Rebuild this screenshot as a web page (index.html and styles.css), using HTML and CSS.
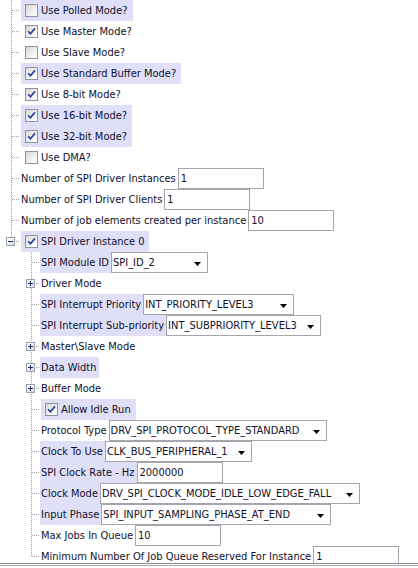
FILE: index.html
```html
<!DOCTYPE html>
<html lang="en">
<head>
<meta charset="utf-8">
<title>SPI Driver Configuration</title>
<link rel="stylesheet" href="styles.css">
</head>
<body>
<div class="tree">
  <div class="row"><span class="g tee"></span><span class="chk hl"><span class="cb"></span>Use Polled Mode?</span></div>
  <div class="row"><span class="g tee"></span><span class="chk"><span class="cb on"><svg viewBox="0 0 11 11" width="11" height="11"><path d="M2.2 5.2L4.4 7.8L9 2.4"/></svg></span>Use Master Mode?</span></div>
  <div class="row"><span class="g tee"></span><span class="chk"><span class="cb"></span>Use Slave Mode?</span></div>
  <div class="row"><span class="g tee"></span><span class="chk hl"><span class="cb on"><svg viewBox="0 0 11 11" width="11" height="11"><path d="M2.2 5.2L4.4 7.8L9 2.4"/></svg></span>Use Standard Buffer Mode?</span></div>
  <div class="row"><span class="g tee"></span><span class="chk"><span class="cb on"><svg viewBox="0 0 11 11" width="11" height="11"><path d="M2.2 5.2L4.4 7.8L9 2.4"/></svg></span>Use 8-bit Mode?</span></div>
  <div class="row"><span class="g tee"></span><span class="chk hl"><span class="cb on"><svg viewBox="0 0 11 11" width="11" height="11"><path d="M2.2 5.2L4.4 7.8L9 2.4"/></svg></span>Use 16-bit Mode?</span></div>
  <div class="row"><span class="g tee"></span><span class="chk hl"><span class="cb on"><svg viewBox="0 0 11 11" width="11" height="11"><path d="M2.2 5.2L4.4 7.8L9 2.4"/></svg></span>Use 32-bit Mode?</span></div>
  <div class="row"><span class="g tee"></span><span class="chk"><span class="cb"></span>Use DMA?</span></div>
  <div class="row"><span class="g tee"></span><span class="lbl">Number of SPI Driver Instances</span><span class="field">1</span></div>
  <div class="row"><span class="g tee"></span><span class="lbl">Number of SPI Driver Clients</span><span class="field">1</span></div>
  <div class="row"><span class="g tee"></span><span class="lbl">Number of job elements created per instance</span><span class="field">10</span></div>
  <div class="row"><span class="g elbow"><span class="exp"><svg viewBox="0 0 7 7" width="7" height="7"><path d="M1 3.5h5"/></svg></span></span><span class="chk hl"><span class="cb on"><svg viewBox="0 0 11 11" width="11" height="11"><path d="M2.2 5.2L4.4 7.8L9 2.4"/></svg></span>SPI Driver Instance 0</span></div>
  <div class="row"><span class="g"></span><span class="g tee"></span><span class="lbl hl">SPI Module ID</span><span class="combo w-module"><span>SPI_ID_2</span><svg viewBox="0 0 7 4" width="7" height="4"><path d="M0 0h7L3.5 4z"/></svg></span></div>
  <div class="row"><span class="g"></span><span class="g tee"><span class="exp"><svg viewBox="0 0 7 7" width="7" height="7"><path d="M1 3.5h5M3.5 1v5"/></svg></span></span><span class="lbl">Driver Mode</span></div>
  <div class="row"><span class="g"></span><span class="g tee"></span><span class="lbl hl">SPI Interrupt Priority</span><span class="combo w-prio"><span>INT_PRIORITY_LEVEL3</span><svg viewBox="0 0 7 4" width="7" height="4"><path d="M0 0h7L3.5 4z"/></svg></span></div>
  <div class="row"><span class="g"></span><span class="g tee"></span><span class="lbl hl">SPI Interrupt Sub-priority</span><span class="combo w-subprio"><span>INT_SUBPRIORITY_LEVEL3</span><svg viewBox="0 0 7 4" width="7" height="4"><path d="M0 0h7L3.5 4z"/></svg></span></div>
  <div class="row"><span class="g"></span><span class="g tee"><span class="exp"><svg viewBox="0 0 7 7" width="7" height="7"><path d="M1 3.5h5M3.5 1v5"/></svg></span></span><span class="lbl">Master\Slave Mode</span></div>
  <div class="row"><span class="g"></span><span class="g tee"><span class="exp"><svg viewBox="0 0 7 7" width="7" height="7"><path d="M1 3.5h5M3.5 1v5"/></svg></span></span><span class="lbl hl">Data Width</span></div>
  <div class="row"><span class="g"></span><span class="g tee"><span class="exp"><svg viewBox="0 0 7 7" width="7" height="7"><path d="M1 3.5h5M3.5 1v5"/></svg></span></span><span class="lbl">Buffer Mode</span></div>
  <div class="row"><span class="g"></span><span class="g tee"></span><span class="chk hl"><span class="cb on"><svg viewBox="0 0 11 11" width="11" height="11"><path d="M2.2 5.2L4.4 7.8L9 2.4"/></svg></span>Allow Idle Run</span></div>
  <div class="row"><span class="g"></span><span class="g tee"></span><span class="lbl">Protocol Type</span><span class="combo w-proto"><span>DRV_SPI_PROTOCOL_TYPE_STANDARD</span><svg viewBox="0 0 7 4" width="7" height="4"><path d="M0 0h7L3.5 4z"/></svg></span></div>
  <div class="row"><span class="g"></span><span class="g tee"></span><span class="lbl hl">Clock To Use</span><span class="combo w-clock"><span>CLK_BUS_PERIPHERAL_1</span><svg viewBox="0 0 7 4" width="7" height="4"><path d="M0 0h7L3.5 4z"/></svg></span></div>
  <div class="row"><span class="g"></span><span class="g tee"></span><span class="lbl hl">SPI Clock Rate - Hz</span><span class="field">2000000</span></div>
  <div class="row"><span class="g"></span><span class="g tee"></span><span class="lbl hl">Clock Mode</span><span class="combo w-mode"><span>DRV_SPI_CLOCK_MODE_IDLE_LOW_EDGE_FALL</span><svg viewBox="0 0 7 4" width="7" height="4"><path d="M0 0h7L3.5 4z"/></svg></span></div>
  <div class="row"><span class="g"></span><span class="g tee"></span><span class="lbl hl">Input Phase</span><span class="combo w-phase"><span>SPI_INPUT_SAMPLING_PHASE_AT_END</span><svg viewBox="0 0 7 4" width="7" height="4"><path d="M0 0h7L3.5 4z"/></svg></span></div>
  <div class="row"><span class="g"></span><span class="g tee"></span><span class="lbl">Max Jobs In Queue</span><span class="field">10</span></div>
  <div class="row"><span class="g"></span><span class="g elbow"></span><span class="lbl">Minimum Number Of Job Queue Reserved For Instance</span><span class="field">1</span></div>
</div>
<div class="edge"></div>
</body>
</html>
```
FILE: styles.css
```css
* { box-sizing: border-box; }

:root {
  --dot: #a3a3a3;
  --dotv: repeating-linear-gradient(to bottom, var(--dot) 0 1px, transparent 1px 2px);
  --dotv-odd: repeating-linear-gradient(to bottom, transparent 0 1px, var(--dot) 1px 2px);
  --doth: repeating-linear-gradient(to right, var(--dot) 0 1px, transparent 1px 2px);
  --hl: #dfdff8;
  --frame: #a5a5ad;
}

html, body { margin: 0; padding: 0; background: #fff; }

body {
  width: 418px;
  height: 568px;
  overflow: hidden;
  font-family: "DejaVu Sans Condensed", "DejaVu Sans", sans-serif;
  font-size: 11px;
  color: #10102a;
}

.tree { height: 563px; overflow: hidden; }

.row {
  display: flex;
  height: 21px;
  line-height: 21px;
  white-space: nowrap;
}

/* tree guide column: dotted connector lines */
.g { flex: none; width: 20px; height: 21px; position: relative; }

.tee, .elbow {
  background-image: var(--dotv), var(--doth);
  background-repeat: no-repeat;
  background-position: 11px 0, 12px 10px;
  background-size: 1px 21px, 8px 1px;
}
.elbow { background-size: 1px 11px, 8px 1px; }
.row:nth-child(even) .tee,
.row:nth-child(even) .elbow { background-image: var(--dotv-odd), var(--doth); }

/* expand / collapse handle */
.exp {
  position: absolute;
  left: 6px;
  top: 6px;
  width: 9px;
  height: 9px;
  border: 1px solid #98a2ae;
  background: linear-gradient(135deg, #ffffff 30%, #d6d6de);
  display: flex;
}
.exp svg { display: block; }
.exp path { stroke: #1d2b66; stroke-width: 1; fill: none; }

/* checkbox node */
.chk {
  display: flex;
  align-items: center;
  gap: 3px;
  margin-left: 1px;
  padding: 0 5px 0 4px;
}
.cb {
  flex: none;
  width: 13px;
  height: 13px;
  border: 1px solid #8e949f;
  background: linear-gradient(135deg, #d6d6d2, #f6f6f4 70%, #ffffff);
  display: flex;
}
.cb svg { display: block; }
.cb path { fill: none; stroke: #2b3f9e; stroke-width: 1.7; }

.hl { background: var(--hl); }

.lbl { padding: 0 2px 0 1px; }

.field {
  flex: none;
  width: 86px;
  height: 21px;
  line-height: 19px;
  border: 1px solid var(--frame);
  padding-left: 2px;
  background: #fff;
}

.combo {
  flex: none;
  display: flex;
  align-items: center;
  justify-content: space-between;
  height: 21px;
  line-height: 19px;
  border: 1px solid var(--frame);
  padding: 0 6px 0 1px;
  background: #fff;
}
.combo svg { flex: none; display: block; margin-top: 2px; }
.combo path { fill: #000; }

.w-module { width: 97px; }
.w-prio { width: 151px; }
.w-subprio { width: 155px; }
.w-proto { width: 218px; }
.w-clock { width: 147px; }
.w-mode { width: 260px; }
.w-phase { width: 230px; }

/* frame edge below the tree */
.edge {
  height: 3px;
  border-top: 1px solid #8f8f9b;
  border-bottom: 1px solid #a8a8ae;
}
```
